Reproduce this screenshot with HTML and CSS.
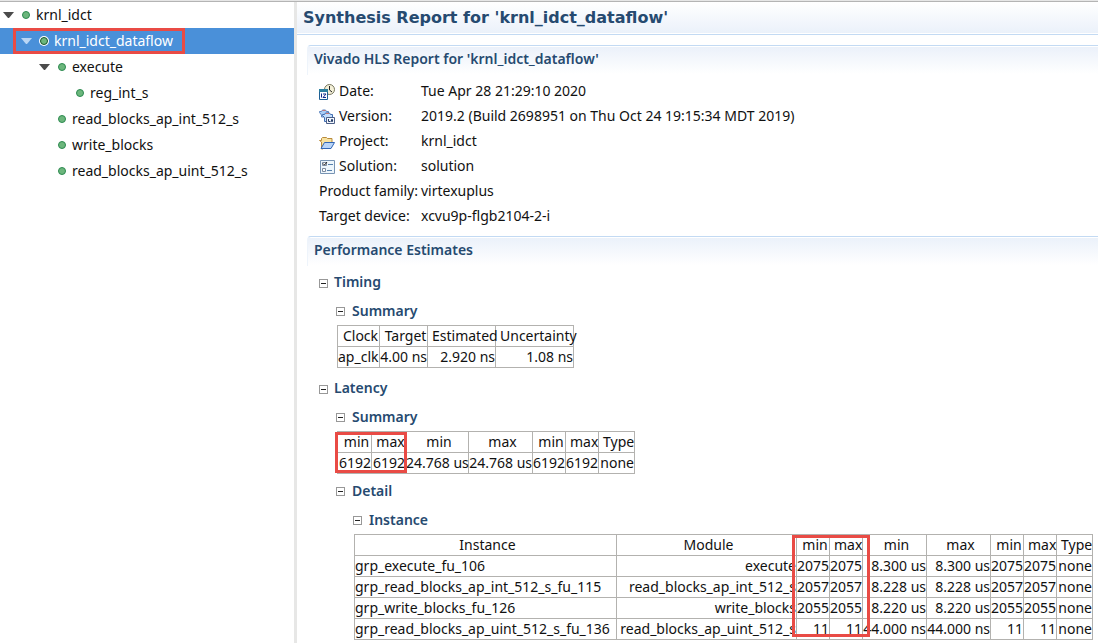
FILE: index.html
```html
<!DOCTYPE html>
<html lang="en">
<head>
<meta charset="utf-8">
<title>Synthesis Report</title>
<link rel="stylesheet" href="styles.css">
</head>
<body>
<div class="topbar"></div>
<div class="workspace">
  <nav class="tree" aria-label="Modules">
    <button class="node level-0"><span class="arrow"></span><span class="dot"></span>krnl_idct</button>
    <button class="node level-1 selected"><span class="arrow"></span><span class="dot"></span>krnl_idct_dataflow<span class="mark mark-node"></span></button>
    <button class="node level-2"><span class="arrow"></span><span class="dot"></span>execute</button>
    <button class="node level-3"><span class="dot"></span>reg_int_s</button>
    <button class="node level-2"><span class="arrow none"></span><span class="dot"></span>read_blocks_ap_int_512_s</button>
    <button class="node level-2"><span class="arrow none"></span><span class="dot"></span>write_blocks</button>
    <button class="node level-2"><span class="arrow none"></span><span class="dot"></span>read_blocks_ap_uint_512_s</button>
  </nav>
  <main class="report">
    <h1 class="title">Synthesis Report for 'krnl_idct_dataflow'</h1>
    <section class="section">
      <h2 class="section-title">Vivado HLS Report for 'krnl_idct_dataflow'</h2>
      <dl class="info">
        <dt><svg class="icon" viewBox="0 0 16 16"><circle cx="10.500" cy="5.500" r="5" fill="#f4f0d8" stroke="#77775f"/><path d="M10.500 2v4l2.500 2" fill="none" stroke="#222"/><path d="M.5 5.500h8v10h-8z" fill="#fff" stroke="#1f6095"/><path d="M0 5h9v3H0z" fill="#2a7f9e"/><path d="M2.500 9.500v4M4 10h3l-3 3.500h3" fill="none" stroke="#102a8c"/></svg>Date:</dt><dd>Tue Apr 28 21:29:10 2020</dd>
        <dt><svg class="icon" viewBox="0 0 16 16"><path d="M.5 3.500v-1h2l1-1.500h3l1 1.500h2v5.500h-7v-2z" fill="#a9cdf5" stroke="#5d83bd"/><path d="M3.500 1.500h3" stroke="#c77777"/><path d="M3.500 6.500v-1h2l1-1.500h4l1 1.500h2v7h-8v-4z" fill="#c3defc" stroke="#416db0"/><path d="M7 4.500h3" stroke="#c77777"/><path d="M7.500 8.500h8v6h-8z" fill="#f2f6fc" stroke="#4c5f86"/><path d="M9.500 10v2.500h2M12.500 10.500h1v2h-1z" fill="none" stroke="#253c68"/></svg>Version:</dt><dd>2019.2 (Build 2698951 on Thu Oct 24 19:15:34 MDT 2019)</dd>
        <dt><svg class="icon" viewBox="0 0 16 16"><path d="M.5 6.500h2v-2l1-1h4l1 1h4.500v5l-9.500 5.500h-1v-7z" fill="#f8e2a0" stroke="#b88b3c"/><path d="M2 14.500l3.500-6h10l-3.500 6z" fill="#b9d5f8" stroke="#3266b5"/></svg>Project:</dt><dd>krnl_idct</dd>
        <dt><svg class="icon" viewBox="0 0 16 16"><path d="M1.500 1.500h14v13h-14z" fill="#eef6fc" stroke="#7894b4"/><path d="M3.500 3.500h4v3h-4zM3.500 9.500h3v3h-3z" fill="#fff" stroke="#7c8ba0"/><path d="M4 4.500l1.500 1.500L8 3" fill="none" stroke="#222"/><path d="M9 5.500h5M8 11.500h5" stroke="#5681ad"/></svg>Solution:</dt><dd>solution</dd>
        <dt>Product family:</dt><dd>virtexuplus</dd>
        <dt>Target device:</dt><dd>xcvu9p-flgb2104-2-i</dd>
      </dl>
    </section>
    <section class="section">
      <h2 class="section-title">Performance Estimates</h2>
      <div class="group">
        <h3 class="heading"><button class="toggle" aria-label="Collapse Timing"></button>Timing</h3>
        <div class="group-body">
          <h4 class="heading sub"><button class="toggle" aria-label="Collapse Summary"></button>Summary</h4>
          <div class="table-wrap">
            <table class="grid timing">
              <colgroup><col class="w42"><col class="w48"><col class="w68"><col class="w78"></colgroup>
              <tr><th>Clock</th><th>Target</th><th>Estimated</th><th>Uncertainty</th></tr>
              <tr><td class="name">ap_clk</td><td>4.00 ns</td><td>2.920 ns</td><td>1.08 ns</td></tr>
            </table>
          </div>
        </div>
        <h3 class="heading next"><button class="toggle" aria-label="Collapse Latency"></button>Latency</h3>
        <div class="group-body">
          <h4 class="heading sub"><button class="toggle" aria-label="Collapse Summary"></button>Summary</h4>
          <div class="table-wrap">
            <table class="grid latency">
              <colgroup><col class="w34"><col class="w34"><col class="w63"><col class="w64"><col class="w33"><col class="w33"><col class="w36"></colgroup>
              <tr><th>min</th><th>max</th><th>min</th><th>max</th><th>min</th><th>max</th><th>Type</th></tr>
              <tr><td>6192</td><td>6192</td><td>24.768 us</td><td>24.768 us</td><td>6192</td><td>6192</td><td>none</td></tr>
            </table>
            <span class="mark mark-latency"></span>
          </div>
          <h4 class="heading sub detail"><button class="toggle" aria-label="Collapse Detail"></button>Detail</h4>
          <div class="group-body">
            <h5 class="heading sub"><button class="toggle" aria-label="Collapse Instance"></button>Instance</h5>
            <div class="table-wrap">
              <table class="grid instance">
                <colgroup><col class="w262"><col class="w180"><col class="w33"><col class="w33"><col class="w64"><col class="w64"><col class="w33"><col class="w33"><col class="w36"></colgroup>
                <tr><th>Instance</th><th>Module</th><th>min</th><th>max</th><th>min</th><th>max</th><th>min</th><th>max</th><th>Type</th></tr>
                <tr><td class="name">grp_execute_fu_106</td><td>execute</td><td>2075</td><td>2075</td><td>8.300 us</td><td>8.300 us</td><td>2075</td><td>2075</td><td>none</td></tr>
                <tr><td class="name">grp_read_blocks_ap_int_512_s_fu_115</td><td>read_blocks_ap_int_512_s</td><td>2057</td><td>2057</td><td>8.228 us</td><td>8.228 us</td><td>2057</td><td>2057</td><td>none</td></tr>
                <tr><td class="name">grp_write_blocks_fu_126</td><td>write_blocks</td><td>2055</td><td>2055</td><td>8.220 us</td><td>8.220 us</td><td>2055</td><td>2055</td><td>none</td></tr>
                <tr><td class="name">grp_read_blocks_ap_uint_512_s_fu_136</td><td>read_blocks_ap_uint_512_s</td><td>11</td><td>11</td><td>44.000 ns</td><td>44.000 ns</td><td>11</td><td>11</td><td>none</td></tr>
              </table>
              <span class="mark mark-instance"></span>
            </div>
          </div>
        </div>
      </div>
    </section>
  </main>
</div>
</body>
</html>
```
FILE: styles.css
```css
* { box-sizing: border-box; }
body {
  margin: 0;
  min-height: 100vh;
  display: flex;
  flex-direction: column;
  overflow: hidden;
  background: #fff;
  color: #111;
  font: 14px/20px "Noto Sans", "Open Sans", sans-serif;
}
h1, h2, h3, h4, h5, dl, dd { margin: 0; }
button { font: inherit; color: inherit; padding: 0; margin: 0; border: 0; background: none; }

.topbar { height: 2px; background: #e6e6e6; border-bottom: 1px solid #b4b4b4; }
.workspace { flex: 1; display: flex; }

.tree {
  flex: 0 0 297px;
  display: flex;
  flex-direction: column;
  border-right: 3px solid #e7e7e6;
}
.node {
  position: relative;
  display: flex;
  align-items: center;
  height: 26px;
  text-align: left;
  white-space: nowrap;
}
.level-0 { padding-left: 3px; }
.level-1 { padding-left: 21px; }
.level-2 { padding-left: 39px; }
.level-3 { padding-left: 75px; }
.selected { background: #4a90d9; color: #fff; }
.arrow {
  width: 11px;
  margin-right: 7px;
  border: 5px solid transparent;
  border-top: 6px solid #4b4b4b;
  border-bottom: 0;
}
.arrow.none { visibility: hidden; }
.selected .arrow { border-top-color: #b9d6f5; }
.dot {
  width: 8px;
  height: 8px;
  margin: 0 6px 0 1px;
  border: 1px solid #2c8a50;
  border-radius: 50%;
  background: #6cb67c;
}
.selected .dot { background: #6cb67c; border-color: #17572c; box-shadow: 0 0 0 1px #fff; }

.mark { position: absolute; border: 3px solid #e94b45; pointer-events: none; }
.mark-node { left: 13px; top: 0; width: 172px; height: 26px; }
.mark-latency { left: -2px; top: 1px; width: 72px; height: 41px; }
.mark-instance { left: 438px; top: 1px; width: 78px; height: 102px; }

.report { flex: 1; min-width: 0; }
.title {
  height: 33px;
  padding: 0 6px;
  border-bottom: 1px solid #c3daf3;
  background: linear-gradient(#fff, #ebf1fa 31px, #fff 31px);
  color: #264a70;
  font: bold 16px/31px "DejaVu Sans", sans-serif;
  white-space: nowrap;
}
.section { margin: 10px 0 0 10px; }
.section + .section { margin-top: 8px; }
.section-title, .heading { color: #264a70; font-size: 14px; font-weight: 600; }
.section-title {
  height: 30px;
  padding-left: 6px;
  border-top: 1px solid #c3daf3;
  border-left: 1px solid #eef4fb;
  border-top-left-radius: 4px;
  background: linear-gradient(#fff 1px, #ebf1fa 1px, #fff 28px);
  line-height: 26px;
}
.info {
  display: grid;
  grid-template-columns: 102px 1fr;
  grid-auto-rows: 25px;
  padding: 3px 0 0 12px;
  line-height: 25px;
  white-space: nowrap;
}
.info dt { display: flex; }
.icon { width: 16px; height: 16px; margin: 6px 4px 0 0; }

.group { padding-left: 12px; }
.group-body { padding-left: 17px; }
.heading { display: flex; align-items: center; gap: 6px; height: 32px; }
.next { margin-top: 4px; }
.sub { height: 27px; padding-bottom: 2px; gap: 7px; }
.detail { height: 33px; padding-bottom: 0; }
.toggle {
  width: 9px;
  height: 9px;
  margin-top: 2px;
  border: 1px solid #989898;
  background: linear-gradient(#222, #222) center / 5px 1px no-repeat;
}
.table-wrap { position: relative; margin-left: 1px; }
.grid { table-layout: fixed; border-collapse: collapse; line-height: 20px; color: #111; }
.timing { width: 237px; }
.latency { width: 298px; }
.instance { width: 739px; }
.grid th, .grid td {
  height: 21px;
  padding: 0;
  border: 1px solid #b3b2af;
  font-weight: 400;
  text-align: right;
  white-space: nowrap;
}
.grid th { padding-left: 4px; text-align: center; }
.grid .name { text-align: left; }
.w33 { width: 33px; }
.w34 { width: 34px; }
.w36 { width: 36px; }
.w42 { width: 42px; }
.w48 { width: 48px; }
.w63 { width: 63px; }
.w64 { width: 64px; }
.w68 { width: 68px; }
.w78 { width: 78px; }
.w180 { width: 180px; }
.w262 { width: 262px; }
```
